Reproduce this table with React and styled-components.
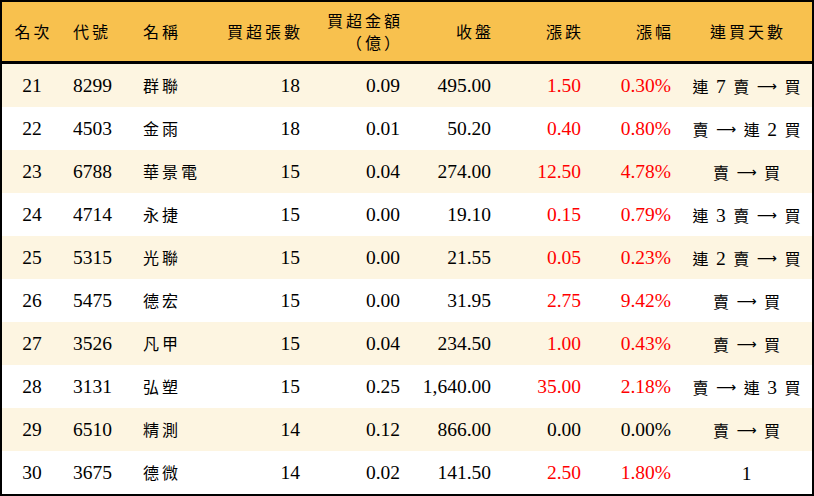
import React from 'react';
import styled, { createGlobalStyle } from 'styled-components';

const GlobalStyle = createGlobalStyle`
  html, body {
    margin: 0;
    padding: 0;
    background: #ffffff;
  }
`;

const COLUMNS = '60px 70px 80px 98px 100px 91px 90px 90px 1fr';

const Frame = styled.div`
  width: 814px;
  height: 496px;
  box-sizing: border-box;
  border: 2px solid #000;
  font-family: "Liberation Serif", "Noto Sans CJK TC", serif;
  font-size: 19.5px;
  color: #000;
  overflow: hidden;
`;

const HeaderRow = styled.div`
  display: grid;
  grid-template-columns: ${COLUMNS};
  height: 59px;
  background: #f8c14e;
  border-bottom: 3px solid #000;
`;

const Row = styled.div`
  display: grid;
  grid-template-columns: ${COLUMNS};
  height: 43px;
  background: ${(p) => (p.$shaded ? '#fdf5e1' : '#ffffff')};
`;

const Cell = styled.div`
  display: flex;
  flex-direction: column;
  justify-content: center;
  align-items: ${(p) =>
    p.$align === 'right' ? 'flex-end' : p.$align === 'left' ? 'flex-start' : 'center'};
  padding: ${(p) =>
    p.$align === 'right' ? '0 10px 0 0' : p.$align === 'left' ? '0 0 0 11px' : '0'};
  color: ${(p) => (p.$red ? '#ff0000' : 'inherit')};
  white-space: nowrap;
  line-height: 1;
`;

const HeadLabel = styled.span`
  font-family: "Noto Sans CJK TC", sans-serif;
  font-size: 16px;
  letter-spacing: 3px;
  margin-right: -3px;
  line-height: 21.5px;
`;

const Name = styled.span`
  font-family: "Noto Sans CJK TC", sans-serif;
  font-size: 16px;
  letter-spacing: 3px;
  line-height: 18px;
  margin-top: -2px;
`;

const Days = styled.div`
  display: flex;
  align-items: center;
  gap: 7.5px;
`;

const Glyph = styled.span`
  font-family: "Noto Sans CJK TC", sans-serif;
  font-size: 16px;
  line-height: 1;
`;

const Arrow = styled.span`
  font-family: "DejaVu Sans", sans-serif;
  font-size: 14px;
  line-height: 1;
  margin-top: 1px;
`;

const Digit = styled.span`
  line-height: 1;
  margin-top: 2px;
`;

const headers = [
  { label: ['名次'], align: 'center' },
  { label: ['代號'], align: 'left' },
  { label: ['名稱'], align: 'left' },
  { label: ['買超張數'], align: 'right' },
  { label: ['買超金額', '（億）'], align: 'right' },
  { label: ['收盤'], align: 'right' },
  { label: ['漲跌'], align: 'right' },
  { label: ['漲幅'], align: 'right' },
  { label: ['連買天數'], align: 'center' },
];

const rows = [
  ['21', '8299', '群聯', '18', '0.09', '495.00', '1.50', '0.30%', '連 7 賣 → 買'],
  ['22', '4503', '金雨', '18', '0.01', '50.20', '0.40', '0.80%', '賣 → 連 2 買'],
  ['23', '6788', '華景電', '15', '0.04', '274.00', '12.50', '4.78%', '賣 → 買'],
  ['24', '4714', '永捷', '15', '0.00', '19.10', '0.15', '0.79%', '連 3 賣 → 買'],
  ['25', '5315', '光聯', '15', '0.00', '21.55', '0.05', '0.23%', '連 2 賣 → 買'],
  ['26', '5475', '德宏', '15', '0.00', '31.95', '2.75', '9.42%', '賣 → 買'],
  ['27', '3526', '凡甲', '15', '0.04', '234.50', '1.00', '0.43%', '賣 → 買'],
  ['28', '3131', '弘塑', '15', '0.25', '1,640.00', '35.00', '2.18%', '賣 → 連 3 買'],
  ['29', '6510', '精測', '14', '0.12', '866.00', '0.00', '0.00%', '賣 → 買'],
  ['30', '3675', '德微', '14', '0.02', '141.50', '2.50', '1.80%', '1'],
];

function DayStreak({ text }) {
  return (
    <Days>
      {text.split(' ').map((t, i) => {
        if (t === '→') return <Arrow key={i}>⟶</Arrow>;
        if (/^\d+$/.test(t)) return <Digit key={i}>{t}</Digit>;
        return <Glyph key={i}>{t}</Glyph>;
      })}
    </Days>
  );
}

export default function App() {
  return (
    <>
      <GlobalStyle />
      <Frame>
        <HeaderRow>
          {headers.map((h, i) => (
            <Cell key={i} $align={h.align}>
              {h.label.map((line, j) => (
                <HeadLabel key={j}>{line}</HeadLabel>
              ))}
            </Cell>
          ))}
        </HeaderRow>
        {rows.map((r, i) => {
          const up = parseFloat(r[6]) > 0;
          return (
            <Row key={r[0]} $shaded={i % 2 === 0}>
              <Cell $align="center">{r[0]}</Cell>
              <Cell $align="left">{r[1]}</Cell>
              <Cell $align="left">
                <Name>{r[2]}</Name>
              </Cell>
              <Cell $align="right">{r[3]}</Cell>
              <Cell $align="right">{r[4]}</Cell>
              <Cell $align="right">{r[5]}</Cell>
              <Cell $align="right" $red={up}>{r[6]}</Cell>
              <Cell $align="right" $red={up}>{r[7]}</Cell>
              <Cell $align="center">
                <DayStreak text={r[8]} />
              </Cell>
            </Row>
          );
        })}
      </Frame>
    </>
  );
}
